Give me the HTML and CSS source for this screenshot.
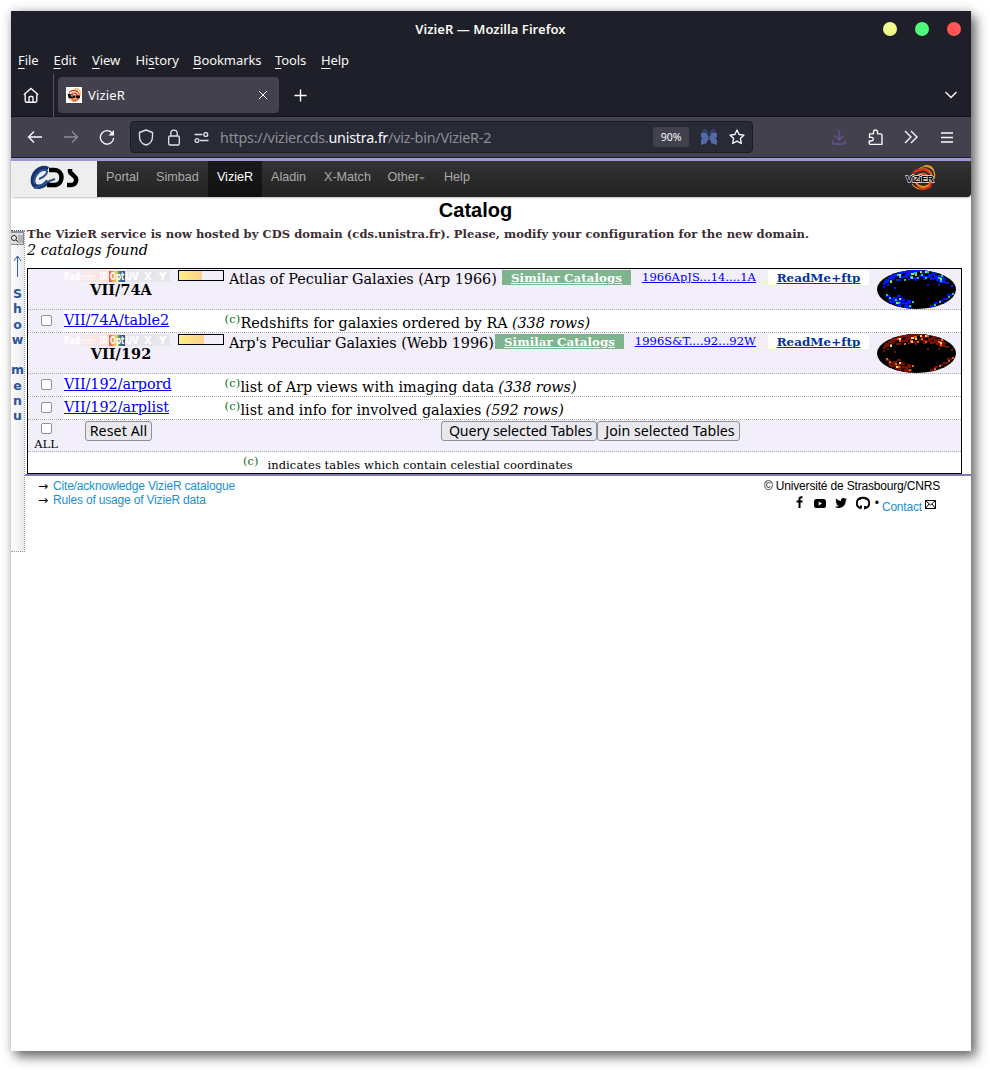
FILE: index.html
```html
<!DOCTYPE html>
<html lang="en">
<head>
<meta charset="utf-8">
<title>VizieR</title>
<link rel="stylesheet" href="styles.css">
</head>
<body>
<svg class="defs" width="0" height="0">
  <defs>
    <clipPath id="sky"><ellipse cx="39.5" cy="19.5" rx="39.5" ry="19.5"/></clipPath>
    <g id="low">
      <path d="M6 14h3M7 12h5M8 10h4M11 8h7M13 6h7M16 5h9M20 3h6M23 7h8M26 2h9M28 5h7M33 1h12M34 4h4M36 8h5M43 3h9M42 6h6M47 1h7M51 5h7M55 3h5M56 8h6M60 6h7M63 9h6M65 12h4M19 10h5M10 15h2M17 18h2M50 15h2M61 15h2M69 13h3M74 16h2M9 26h4M11 29h7M13 32h11M16 28h4M18 34h8M20 26h4M22 30h6M25 33h9M27 36h8M30 31h4M53 36h5M57 33h4M62 31h4M66 29h5M70 25h5M67 33h3"/>
      <path d="M15 9h2M29 1h3M31 9h3M38 10h2M46 9h3M53 9h4M62 12h3M12 31h2M16 31h6M20 36h4M24 28h2M28 34h3M31 36h3M6 17h2M65 7h2M40 1h4M30 3h9M46 7h9M57 6h5M59 10h9M26 38h8"/>
    </g>
    <path id="mid" d="M13 11h2M20 5h3M22 7h2M27 10h2M33 7h3M37 3h3M40 8h2M44 5h2M50 2h2M48 8h2M61 8h3M63 11h2M64 6h2M9 25h2M12 28h2M18 30h2M21 33h2M35 32h2M32 36h2M57 35h2M71 27h2M62 32h2M75 24h2"/>
    <path id="high" d="M13 12h2M22 5h2M34 4h3M34 8h2M38 5h2M43 2h2M48 2h2M63 9h2M19 33h2M22 29h2"/>
    <g id="whirl" fill="none">
      <path d="M6 7c6-4 14-4 17 2s-2 14-9 13S6 13 11 10s11 1 9 6" stroke="#e8571b" stroke-width="2.4"/>
      <path d="M11 4C19-2 29 4 26 14M16 1c5-1 9 1 10 6M4 19c4 6 13 7 19 2M8 16c1 5 8 8 13 4" stroke="#f0981c" stroke-width="1.2"/>
      <path d="M5 12C4 5 13 2 20 7M11 24c7 2 14-3 13-9M12 12c4-3 8-1 7 3" stroke="#d0241a" stroke-width="1.7"/>
    </g>
    <linearGradient id="fade"><stop offset="0" stop-color="#f2eefa"/><stop offset=".38" stop-color="#fce3e0"/><stop offset=".48" stop-color="#f7e4e2"/><stop offset=".6" stop-color="#e6e5eb"/><stop offset="1" stop-color="#e7e7e9"/></linearGradient>
    <linearGradient id="rainbow"><stop offset="0" stop-color="#e9534c"/><stop offset=".28" stop-color="#f4ad43"/><stop offset=".48" stop-color="#e7cf61"/><stop offset=".68" stop-color="#347e6e"/><stop offset="1" stop-color="#314b9b"/></linearGradient>
    <g id="spectrum">
      <rect width="106" height="12" fill="url(#fade)"/><rect x="45" y="1" width="16" height="11" fill="url(#rainbow)"/>
      <g class="bands"><text x="0" y="9.500" textLength="16" lengthAdjust="spacingAndGlyphs">Rad</text><text x="16.500" y="9.500" textLength="15" lengthAdjust="spacingAndGlyphs" class="thin">mm</text><text x="35.500" y="9.500" textLength="8.500" lengthAdjust="spacingAndGlyphs">IR</text><text x="46" y="9.500" textLength="14.500" lengthAdjust="spacingAndGlyphs">Opt</text><text x="61.500" y="9.500" textLength="13" lengthAdjust="spacingAndGlyphs">UV</text><text x="80" y="9.500">X</text><text x="95" y="9.500">Y</text></g>
    </g>
  </defs>
</svg>
<div class="window">
  <header class="titlebar">
    <span class="title">VizieR — Mozilla Firefox</span>
    <span class="dots"><i class="dot yellow"></i><i class="dot green"></i><i class="dot red"></i></span>
  </header>
  <nav class="menubar">
    <span class="m1"><u>F</u>ile</span><span class="m2"><u>E</u>dit</span><span class="m3"><u>V</u>iew</span><span class="m4">Hi<u>s</u>tory</span><span class="m5"><u>B</u>ookmarks</span><span class="m6"><u>T</u>ools</span><span><u>H</u>elp</span>
  </nav>
  <div class="tabs">
    <div class="home"><svg class="ico" width="16" height="17" viewBox="0 0 16 17"><path d="M2.200 7.500v6.200a1.500 1.500 0 0 0 1.500 1.500h8.600a1.500 1.500 0 0 0 1.500-1.500V7.500M.8 7.800 8 1.500l7.200 6.300M6 15v-4.500a1 1 0 0 1 1-1h2a1 1 0 0 1 1 1V15"/></svg></div>
    <div class="tab">
      <svg width="16" height="16" viewBox="0 0 30 30"><rect width="30" height="30" fill="#fff"/><g transform="translate(1 2)"><use href="#whirl"/></g><path d="M3 13h9v3h14v5H5z" fill="#160703"/><path d="M9 14l3 4M18 18v4" stroke="#f8b21d" stroke-width="2"/></svg>
      <span class="tabname">VizieR</span>
      <svg class="ico thinline" width="10" height="10" viewBox="0 0 10 10"><path d="M1 1l8 8M9 1L1 9"/></svg>
    </div>
    <svg class="ico plus" width="13" height="13" viewBox="0 0 13 13"><path d="M6.500 .5v12M.5 6.500h12"/></svg>
    <svg class="ico chevron" width="14" height="8" viewBox="0 0 14 8"><path d="M1.500 1l5.500 5.500L12.500 1"/></svg>
  </div>
  <div class="toolbar">
    <svg class="ico" width="16" height="14" viewBox="0 0 16 14"><path d="M15 7H1.500M7 1.500L1.500 7 7 12.500"/></svg>
    <svg class="ico dim" width="16" height="14" viewBox="0 0 16 14"><path d="M1 7h13.500M9 1.500L14.500 7 9 12.500"/></svg>
    <svg class="ico" width="16" height="16" viewBox="0 0 16 16"><path d="M13.500 4.500A6.700 6.700 0 1 0 14.700 9"/><path d="M15 1v5.500H9.500z" fill="#fbfbfe" stroke="none"/></svg>
    <div class="urlbar">
      <svg class="ico soft" width="16" height="17" viewBox="0 0 16 17"><path d="M8 1l6.500 2.500v4C14.500 11.500 12 15 8 16 4 15 1.500 11.500 1.500 7.500v-4z" stroke-linejoin="round"/></svg>
      <svg class="ico soft" width="12" height="17" viewBox="0 0 12 17"><rect x=".7" y="7" width="10.600" height="9" rx="1.500"/><path d="M2.800 7V4.300a3.200 3.200 0 0 1 6.400 0V7"/></svg>
      <svg class="ico soft" width="15" height="11" viewBox="0 0 15 11"><path d="M.5 2.500h8M6 8.500h8.500"/><circle cx="11.800" cy="2.500" r="1.900"/><circle cx="3" cy="8.500" r="1.900"/></svg>
      <span class="url">https://vizier.cds.<b>unistra.fr</b>/viz-bin/VizieR-2</span>
      <span class="zoom">90%</span>
      <svg class="wings" width="16" height="16" viewBox="0 0 16 16"><path d="M0 4h5l2.500 3v4L6 12v2l-6 2v-5l1.500-1.500L0 8zM16 4h-5L8.500 7v4l1.500 1v2l6 2v-5l-1.500-1.500L16 8z" fill="#5369a9"/><path d="M1 3h3l3 4M2 1h3l2 4M15 3h-3L9 7M14 1h-3L9 5" fill="none" stroke="#435894"/></svg>
      <svg class="ico star" width="16" height="16" viewBox="0 0 16 16"><path d="M8 1l2.100 4.500 4.900.6-3.600 3.400.9 5L8 12.100l-4.300 2.400.9-5L1 6.100l4.900-.6z" stroke-linejoin="round"/></svg>
    </div>
    <div class="tools">
      <svg class="ico violet" width="14" height="16" viewBox="0 0 14 16"><path d="M7 1v9.500M2.500 6.500L7 11l4.500-4.500M.8 11.500v2a1.500 1.500 0 0 0 1.500 1.500h9.400a1.500 1.500 0 0 0 1.500-1.500v-2"/></svg>
      <svg class="ico" width="15" height="17" viewBox="0 0 15 17"><path d="M1.500 6V4.800h4V3a2 2 0 0 1 4 0v1.800h3a1.500 1.500 0 0 1 1.500 1.500v9H2.200a1 1 0 0 1-1-1V12h2.300a1.800 1.800 0 0 0 0-3.600H1.500z" stroke-linejoin="round"/></svg>
      <svg class="ico" width="14" height="14" viewBox="0 0 14 14"><path d="M1 1l6 6-6 6M7 1l6 6-6 6"/></svg>
      <svg class="ico" width="12" height="11" viewBox="0 0 12 11"><path d="M0 1h12M0 5.500h12M0 10h12"/></svg>
    </div>
  </div>
  <div class="sitebar">
    <div class="cds">
      <svg width="50" height="26" viewBox="0 0 50 26"><path d="M19 4C11 0 3 9 4 17c1 7 10 6 15-1" fill="none" stroke="#16336f" stroke-width="4.500"/><path d="M6 19C3 13 11 4 16 5c5 1 0 7-6 9M5 23c7-1 13-7 21-9" fill="none" stroke="#2c5297" stroke-width="2"/><path d="M20 5h5c10 0 10 15 0 15h-7" fill="none" stroke="#000" stroke-width="4.500"/><path d="M41 4v2q0 2 2 3l2 2c4 3 2 9-3 9h-4" fill="none" stroke="#000" stroke-width="4.500"/></svg>
    </div>
    <span class="n1">Portal</span><span class="n2">Simbad</span><span class="on">VizieR</span><span class="n4">Aladin</span><span class="n5">X-Match</span><span class="n6">Other<i class="caret"></i></span><span>Help</span>
    <div class="vlogo"><svg width="32" height="27" viewBox="0 0 32 27"><use href="#whirl" x="2" y="1"/></svg><span>ViZiER</span></div>
  </div>
  <h1>Catalog</h1>
  <div class="content">
    <aside>
      <svg width="13" height="14" viewBox="0 0 13 14" class="sideicon"><rect width="13" height="14" fill="#ddd"/><path d="M0 1h13" stroke="#8b8bad" stroke-width="2"/><path d="M7 5h5M7 7h5M7 9h5M7 11h5M0 13.500h13M12.500 2v12" stroke="#888"/><circle cx="3" cy="7" r="2.500" fill="#eee" stroke="#222"/><path d="M5 9l2 2" stroke="#222"/></svg>
      <svg width="9" height="22" viewBox="0 0 9 22" class="uparrow"><path d="M4.500 22V1M1 6l3.500-5L8 6" fill="none" stroke="#3465a4"/></svg>
      <div class="vert"><span>S</span><span>h</span><span>o</span><span>w</span><span></span><span>m</span><span>e</span><span>n</span><span>u</span></div>
    </aside>
    <main>
      <p class="notice">The VizieR service is now hosted by CDS domain (cds.unistra.fr). Please, modify your configuration for the new domain.</p>
      <p class="found">2 catalogs found</p>
      <div class="table">
        <div class="row cat">
          <div></div>
          <div class="name"><svg class="spec" width="106" height="12"><use href="#spectrum"/></svg><b>VII/74A</b></div>
          <div class="pop"><i style="width:23px"></i></div>
          <div class="desc">Atlas of Peculiar Galaxies (Arp 1966)</div>
          <a class="similar">Similar Catalogs</a><a class="bib">1966ApJS...14....1A</a><a class="readme">ReadMe+ftp</a>
          <svg class="map blue" width="79" height="39" viewBox="0 0 79 39"><g clip-path="url(#sky)"><rect width="79" height="39"/><use class="low" href="#low"/><use class="mid" href="#mid"/><use class="high" href="#high"/></g></svg>
        </div>
        <div class="row tab-row"><div class="chk"><input type="checkbox"></div><a>VII/74A/table2</a><div class="info"><sup>(c)</sup>Redshifts for galaxies ordered by RA <em>(338 rows)</em></div></div>
        <div class="row cat">
          <div></div>
          <div class="name"><svg class="spec" width="106" height="12"><use href="#spectrum"/></svg><b>VII/192</b></div>
          <div class="pop"><i style="width:25px"></i></div>
          <div class="desc">Arp's Peculiar Galaxies (Webb 1996)</div>
          <a class="similar shift">Similar Catalogs</a><a class="bib">1996S&amp;T....92...92W</a><a class="readme">ReadMe+ftp</a>
          <svg class="map fire" width="79" height="39" viewBox="0 0 79 39"><g clip-path="url(#sky)"><rect width="79" height="39"/><use class="low" href="#low"/><use class="mid" href="#mid"/><use class="high" href="#high"/></g></svg>
        </div>
        <div class="row tab-row"><div class="chk"><input type="checkbox"></div><a>VII/192/arpord</a><div class="info"><sup>(c)</sup>list of Arp views with imaging data <em>(338 rows)</em></div></div>
        <div class="row tab-row"><div class="chk"><input type="checkbox"></div><a>VII/192/arplist</a><div class="info"><sup>(c)</sup>list and info for involved galaxies <em>(592 rows)</em></div></div>
        <div class="row actions"><div class="all"><input type="checkbox"><span>ALL</span></div><button class="reset">Reset All</button><button class="query">Query selected Tables</button><button class="join">Join selected Tables</button></div>
        <div class="row legend"><sup>(c)</sup><span>indicates tables which contain celestial coordinates</span></div>
      </div>
      <footer>
        <div class="links"><div><span>→</span><a>Cite/acknowledge VizieR catalogue</a></div><div><span>→</span><a>Rules of usage of VizieR data</a></div></div>
        <div class="credits"><div>© Université de Strasbourg/CNRS</div>
          <div class="social">
            <svg class="fb" width="7" height="13" viewBox="0 0 7 13"><path d="M6.500 1.200H5.200Q3.500 1.200 3.500 3v9M.5 5.500h6" fill="none" stroke="#000" stroke-width="2"/></svg>
            <svg width="12" height="9" viewBox="0 0 12 9"><rect width="12" height="9" rx="2.500"/><path d="M4.700 2.500v4l3.300-2z" fill="#fff"/></svg>
            <svg width="12" height="10" viewBox="0 0 12 10"><path d="M0 8.500q2 .3 3.500-.8Q1.500 7 1.200 5.800h1Q.6 5 .7 3.300l1 .2Q0 2 1 .5q2 2.400 4.900 2.500Q5.800.1 8.300 0q1 0 1.700.8l1.600-.5-1 1.400 1.400-.4-1.200 1.300C10.800 7 8 10 4 10Q1.500 10 0 8.500"/></svg>
            <svg width="14" height="14" viewBox="0 0 14 14"><path d="M5 12.300C-1.200 10.500-.5 1.800 7 1.800S15.200 10.500 9 12.300V10M5 12.500v-3M3.500 2.500l1.500 1M10.500 2.500L9 3.500" fill="none" stroke="#000" stroke-width="1.900"/></svg>
            <span class="bullet">•</span><a>Contact</a>
            <svg width="11" height="9" viewBox="0 0 11 9"><path d="M.5.5h10v8H.5zL5.500 5l5-4.500M.5 8.500L4 4M10.500 8.500L7 4" fill="none" stroke="#000"/></svg>
          </div>
        </div>
      </footer>
    </main>
  </div>
</div>
</body>
</html>
```
FILE: styles.css
```css
* { box-sizing: border-box; }
body { margin: 0; padding: 11px; height: 1070px; overflow: hidden; background: #fff; font-family: "DejaVu Serif", serif; }
.defs { position: absolute; }
svg { display: block; flex: none; }
h1, p { margin: 0; }
.window { width: 960px; height: 1040px; background: #fff; box-shadow: 5px 6px 11px rgba(0,0,0,.55), 0 0 10px rgba(0,0,0,.18); }
.titlebar { height: 36px; background: #1e1f29; border-bottom: 1px solid #1b1c25; display: flex; align-items: center; justify-content: center; color: #f8f8f2; font: 600 13px "Noto Sans", sans-serif; position: relative; padding-right: 1px; }
.title { letter-spacing: .04px; }
.dots { position: absolute; right: 10px; top: 11px; display: flex; gap: 18px; }
.dot { width: 14px; height: 14px; border-radius: 50%; }
.yellow { background: #f1fa8c; } .green { background: #50fa7b; } .red { background: #ff5555; }
.menubar { height: 27px; background: #1e1f29; color: #f8f8f2; display: flex; padding-left: 7px; font: 13px/27px "Noto Sans", sans-serif; letter-spacing: -.07px; }
.menubar u { text-underline-offset: 3px; text-decoration-thickness: 1px; }
.m1 { width: 35.500px; } .m2 { width: 38.500px; } .m3 { width: 43.500px; } .m4 { width: 57.500px; } .m5 { width: 82px; } .m6 { width: 46px; }
.tabs { height: 43px; background: #1e1f29; border-bottom: 1px solid #14151b; display: flex; align-items: center; }
.home { width: 43px; height: 43px; border-right: 1px solid #55565f; display: flex; align-items: center; padding-left: 12px; }
.ico { fill: none; stroke: #fbfbfe; stroke-width: 1.35; }
.thinline { stroke-width: 1; }
.tab { margin-left: 4px; width: 221px; height: 36px; border-radius: 4px; background: #42414d; display: flex; align-items: center; padding: 0 11px 0 8px; }
.tabname { flex: 1; margin-left: 6px; color: #fbfbfe; font: 13px "Noto Sans", sans-serif; letter-spacing: .15px; }
.plus { margin-left: 15px; }
.chevron { margin-left: auto; margin-right: 13px; }
.toolbar { height: 41px; background: #42414d; border-bottom: 1px solid #1e1f29; display: flex; align-items: center; padding-left: 16px; gap: 20px; }
.toolbar > .ico:nth-child(3) { margin-right: -6px; }
.dim { opacity: .4; } .soft { stroke: #e0e0e4; }
.urlbar { width: 623px; height: 32px; border: 1px solid #1a1b26; border-radius: 4px; background: #282a36; display: flex; align-items: center; padding-left: 7px; gap: 14px; margin-left: 1px; }
.url { width: 424px; margin-left: -3px; color: #8e8f96; font: 14.300px "Noto Sans", sans-serif; letter-spacing: -.21px; }
.url b { color: #fbfbfe; font-weight: 400; }
.zoom { width: 36px; height: 20px; background: #42414d; color: #fbfbfe; border-radius: 3px; font: 10.500px/20px "Noto Sans", sans-serif; text-align: center; margin-left: -5px; }
.wings { margin-left: -2px; } .star { margin-left: -2px; }
.tools { display: flex; align-items: center; margin-left: auto; padding-right: 18px; gap: 22px; }
.tools svg:nth-child(3) { margin: 0 1px 0 -1px; }
.violet { stroke: #6f5090; }
.sitebar { height: 39px; border-top: 3px solid #9b98d6; background: linear-gradient(#333, #222); border-radius: 0 0 4px 4px; display: flex; color: #aaa; font: 12.600px/33px "Liberation Sans", sans-serif; box-shadow: 0 1px 2px rgba(0,0,0,.25); }
.cds { width: 86px; background: #eee; padding: 4px 0 0 18px; margin-right: 9px; }
.n1 { width: 50px; } .n2 { width: 52px; } .n4 { width: 53px; } .n5 { width: 63.500px; } .n6 { width: 56.500px; }
.sitebar .on { width: 54px; text-align: center; color: #fff; background: linear-gradient(#191919, #111); margin-right: 9px; }
.caret { display: inline-block; border: 3px solid transparent; border-top-color: #777; border-bottom: 0; margin: 0 0 1px; }
.vlogo { margin: 3px 33px 0 auto; position: relative; width: 32px; height: 27px; }
.vlogo span { position: absolute; left: 0; top: 8px; font: bold 9.500px/13px "Liberation Sans", sans-serif; letter-spacing: -.5px; color: #000; -webkit-text-stroke: 1.300px #ddd; paint-order: stroke fill; }
h1 { height: 29px; font: bold 20px/26px "Liberation Sans", sans-serif; text-align: center; padding-right: 31px; }
.content { display: flex; margin-top: 2px; }
aside { width: 14px; height: 322px; margin-top: 2px; border-right: 1px dotted #999; border-bottom: 1px dotted #999; border-top: 1px dotted #555; background: linear-gradient(90deg, #fff, #e9e9ee); flex: none; }
.uparrow { margin: 10px 0 0 2px; }
.vert { display: flex; flex-direction: column; align-items: center; margin-top: 9px; font: bold 12.500px/15.400px "DejaVu Sans", sans-serif; color: #2c5599; }
.vert span { height: 15.300px; }
main { width: 946px; }
.notice { padding-left: 2px; height: 15px; font: bold 11.520px/16px "DejaVu Serif", serif; letter-spacing: .061px; color: #3b2c33; margin-top: -2px; white-space: nowrap; }
.found { padding-left: 2px; height: 27px; font: italic 14.400px/19px "DejaVu Serif", serif; }
.table { width: 935px; margin-left: 2px; border: 1px solid #000; font-size: 14.400px; }
.row { display: flex; border-bottom: 1px dotted #aaa; }
.row > div:first-child { width: 36px; flex: none; background: #f2eefa; }
.row a { color: #00e; text-decoration: underline; }
.cat { height: 41px; background: #f2eefa; }
.name { width: 114px; text-align: center; line-height: 17px; padding-top: 1px; }
.name b { display: block; margin-top: -1px; letter-spacing: .08px; }
.bands { font: bold 10px "DejaVu Sans", sans-serif; fill: #fff; }
.thin { font-weight: 400; font-size: 9px; }
.spec { margin-bottom: -1px; }
.pop { width: 46px; height: 11px; border: 1px solid #000; margin-top: 1px; flex: none; background: #f2eefa; }
.pop i { display: block; height: 9px; background: linear-gradient(90deg, #ffee82, #ffd08d); }
.desc { width: 278px; padding-left: 5px; white-space: nowrap; line-height: 20px; letter-spacing: -.035px; }
.row .similar { width: 129px; height: 15px; margin-top: 1px; color: #fff; background: #7eb58e; font: bold 11.800px/17px "DejaVu Serif", serif; letter-spacing: .08px; text-align: center; }
.similar.shift { margin-left: -7px; margin-right: 7px; }
.bib { width: 125px; text-align: right; font-size: 11.520px; line-height: 17px; white-space: nowrap; letter-spacing: .05px; }
.row .readme { width: 101px; height: 15px; margin: 1px 8px 0 12px; background: #fff; color: #039; font: bold 11.900px/17px "DejaVu Serif", serif; letter-spacing: .06px; text-align: center; }
.map { margin-top: 1px; }
.map use { fill: none; stroke-width: 2; shape-rendering: crispEdges; }
.map .low { stroke-width: 2.600; }
.blue .low { stroke: #0019ff; } .blue .mid { stroke: #16c8b8; } .blue .high { stroke: #a8ee28; }
.fire .low { stroke: #7c1002; } .fire .mid { stroke: #e45d16; } .fire .high { stroke: #ffd477; }
.tab-row { height: 23px; line-height: 20px; }
.tab-row a { width: 160.500px; letter-spacing: -.06px; }
input { appearance: none; display: block; width: 11px; height: 11px; margin: 0; border: 1px solid #8f8f9d; border-radius: 2px; background: #fff; }
.chk input { margin: 5px 0 0 13px; }
.info { line-height: 26px; white-space: nowrap; display: flex; letter-spacing: -.03px; }
.info em { margin-left: 4.300px; }
sup { color: #107020; font-size: 11.520px; line-height: 18px; }
.info sup { letter-spacing: .2px; }
.actions { height: 32px; background: #f2eefa; }
.all { font-size: 11.520px; line-height: 17px; text-align: center; }
.all input { margin: 3px 0 2px 13px; }
button { height: 20px; margin: 1px 0 0; padding: 0; border: 1px solid #8f8f9d; border-radius: 3px; background: #e9e9ed; font: 14.200px/17px "Noto Sans", sans-serif; color: #000; white-space: nowrap; letter-spacing: -.1px; }
.reset { width: 67px; margin-left: 21px; padding-bottom: 1px; letter-spacing: .1px; }
.query { width: 156px; margin-left: 289px; padding: 0 0 1px 3px; }
.join { width: 143px; padding: 0 0 1px 3px; letter-spacing: 0; }
.legend { height: 21px; border: 0; font-size: 11.520px; padding-left: 215px; }
.legend span { line-height: 26px; margin-left: 9px; letter-spacing: .07px; }
footer { border-top: 2px solid #8179b4; display: flex; justify-content: space-between; font: 12px/14px "Liberation Sans", sans-serif; letter-spacing: -.18px; padding: 3px 31px 0 13px; }
footer a { color: #1a90cf; }
.links div { display: flex; }
.links span { width: 15px; font: 12px/14px "DejaVu Sans", sans-serif; }
.credits { text-align: right; }
.social { display: flex; align-items: center; justify-content: flex-end; padding-right: 4px; margin-top: 1px; height: 18px; gap: 9px; }
.fb { margin-right: 2px; margin-top: -2px; }
.bullet { margin: 0 -6px 0 -4px; }
.social a { margin-right: -6px; margin-top: 8px; }
.social svg:last-child { margin-top: 3px; }
```
